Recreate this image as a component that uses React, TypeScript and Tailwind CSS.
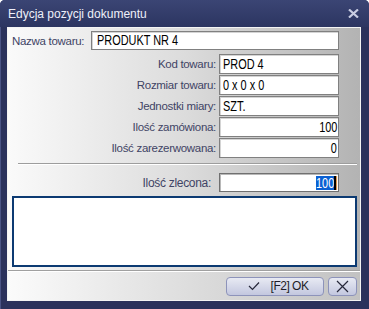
import React from 'react';

const sans = "font-['Liberation_Sans',Arial,sans-serif]";

function Field({
  label,
  value,
  right,
}: {
  label: string;
  value: string;
  right?: boolean;
}) {
  return (
    <div className="flex h-[20px] items-center justify-end gap-[3px]">
      <span className="whitespace-nowrap text-[11.5px] tracking-[-0.3px] text-[#3f4465]">
        {label}
      </span>
      <div
        className={`flex h-[20px] w-[120px] items-center overflow-hidden border border-[#808080] bg-white text-[14px] text-black shadow-[inset_1px_1px_0_#d4d4d4] ${
          right ? 'justify-end pr-[1px]' : 'pl-[3px]'
        }`}
      >
        <span
          className={`inline-block whitespace-nowrap scale-x-[0.78] ${
            right ? 'origin-right' : 'origin-left'
          }`}
        >
          {value}
        </span>
      </div>
    </div>
  );
}

export default function App() {
  return (
    <div
      className={`flex h-[309px] w-[369px] flex-col rounded-t-[5px] bg-[#2b325c] shadow-[inset_1px_1px_0_#4a5485] ${sans}`}
    >
      {/* pasek tytułu */}
      <div className="flex h-[27px] shrink-0 items-center justify-between rounded-t-[5px] bg-linear-to-b from-[#3b4574] to-[#2c3561] pl-[8px] pr-[10px]">
        <span className="text-[12px] text-[#eef0fa]">
          Edycja pozycji dokumentu
        </span>
        <svg width="11" height="9" viewBox="0 0 11 9">
          <path
            d="M1 0.5 L10 8.5 M10 0.5 L1 8.5"
            stroke="#c9cde2"
            strokeWidth="2.2"
          />
        </svg>
      </div>

      {/* obszar klienta */}
      <div className="mb-[8px] ml-[7px] mr-[8px] flex flex-1 flex-col border border-[#f4f4f4] bg-linear-to-r from-[#fafafa] via-[#dcdcdc] to-[#b3b3b3]">
        <div className="flex flex-col pl-[4px] pr-[21px] pt-[3px]">
          <div className="flex items-start">
            <span className="mt-[2px] w-[79px] whitespace-nowrap text-[11.5px] tracking-[-0.3px] text-[#3f4465]">
              Nazwa towaru:
            </span>
            <div className="flex h-[19px] flex-1 items-center overflow-hidden border border-[#808080] bg-white pl-[5px] text-[14px] text-black shadow-[inset_1px_1px_0_#d4d4d4]">
              <span className="inline-block origin-left scale-x-[0.78] whitespace-nowrap">
                PRODUKT NR 4
              </span>
            </div>
          </div>

          <div className="mt-[4px] flex flex-col gap-[1px]">
            <Field label="Kod towaru:" value="PROD 4" />
            <Field label="Rozmiar towaru:" value="0 x 0 x 0" />
            <Field label="Jednostki miary:" value="SZT." />
            <Field label="Ilość zamówiona:" value="100" right />
            <Field label="Ilość zarezerwowana:" value="0" right />
          </div>
        </div>

        {/* separator */}
        <div className="ml-[10px] mr-[3px] mt-[5px] h-[2px] border-t border-[#9d9d9d] bg-white" />

        <div className="mt-[8px] flex items-center justify-end gap-[8px] pr-[21px]">
          <span className="whitespace-nowrap text-[12px] tracking-[-0.3px] text-[#3f4465]">
            Ilość zlecona:
          </span>
          <div className="flex h-[19px] w-[120px] items-center justify-end overflow-hidden border border-[#707070] bg-white pr-[1px] text-[14px] shadow-[inset_1px_1px_0_#b8b8b8]">
            <span className="flex origin-right scale-x-[0.78] items-center">
              <span className="bg-[#0a60d2] leading-[14px] text-white">100</span>
              <span className="h-[14px] w-[3px] bg-black" />
              <span className="h-[14px] w-[1px] bg-[#f08a24]" />
            </span>
          </div>
        </div>

        {/* pole notatki */}
        <div className="ml-[4px] mr-[3px] mt-[4px] h-[71px] border-2 border-[#0c3a72] bg-white" />

        {/* stopka */}
        <div className="mt-[3px] h-[2px] border-t border-[#a0a0a0] bg-white" />
        <div className="flex flex-1 items-center justify-end gap-[4px] bg-linear-to-r from-[#fbfbfb] via-[#dedede] to-[#c2c2c2] pr-[3px]">
          <button className="flex h-[19px] w-[98px] items-center justify-center gap-[11px] rounded-[4px] border border-[#8d93ba] bg-linear-to-b from-[#e8eaf3] to-[#c3c7df] pl-[6px] text-[12px] tracking-[-0.5px] text-[#1e1e28]">
            <svg width="12" height="10" viewBox="0 0 12 10">
              <path
                d="M1 5 L4.5 8.5 L11 1.5"
                fill="none"
                stroke="#26283a"
                strokeWidth="1.2"
              />
            </svg>
            <span>[F2] OK</span>
          </button>
          <button className="flex h-[19px] w-[29px] items-center justify-center rounded-[4px] border border-[#8d93ba] bg-linear-to-b from-[#e8eaf3] to-[#c3c7df]">
            <svg width="13" height="13" viewBox="0 0 13 13">
              <path
                d="M1 1 L12 12 M12 1 L1 12"
                stroke="#26283a"
                strokeWidth="1.2"
              />
            </svg>
          </button>
        </div>
      </div>
    </div>
  );
}
